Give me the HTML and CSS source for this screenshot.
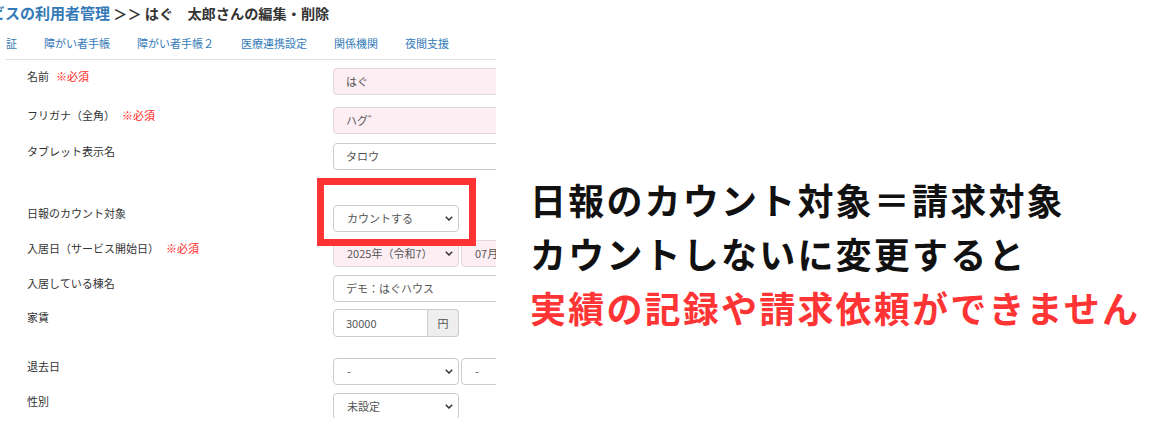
FILE: index.html
```html
<!DOCTYPE html>
<html lang="ja">
<head>
<meta charset="utf-8">
<title>利用者管理</title>
<link rel="stylesheet" href="styles.css">
</head>
<body>
<div class="page">
  <div class="panel">
    <div class="title"><span class="crumb">サービスの利用者管理</span> ＞＞ はぐ　太郎さんの編集・削除</div>
    <div class="tabs">
      <span class="tab">証</span>
      <span class="tab">障がい者手帳</span>
      <span class="tab">障がい者手帳２</span>
      <span class="tab">医療連携設定</span>
      <span class="tab">関係機関</span>
      <span class="tab">夜間支援</span>
    </div>
    <div class="form">
      <div class="row">
        <div class="label">名前<span class="req">※必須</span></div>
        <div class="ctrl wide pink">はぐ</div>
      </div>
      <div class="row mt12">
        <div class="label">フリガナ（全角）<span class="req">※必須</span></div>
        <div class="ctrl wide pink">ハグ゛</div>
      </div>
      <div class="row mt9">
        <div class="label">タブレット表示名</div>
        <div class="ctrl wide">タロウ</div>
      </div>
      <div class="row mt35">
        <div class="label">日報のカウント対象</div>
        <div class="ctrl sel"><span>カウントする</span><svg class="chev" width="8" height="5" viewBox="0 0 8 5"><polyline points="0.8,0.8 4,4 7.2,0.8" fill="none" stroke="#333" stroke-width="1.5"/></svg></div>
      </div>
      <div class="row mt8">
        <div class="label">入居日（サービス開始日）<span class="req">※必須</span></div>
        <div class="pair">
          <div class="ctrl sel pink"><span>2025年（令和7）</span><svg class="chev" width="8" height="5" viewBox="0 0 8 5"><polyline points="0.8,0.8 4,4 7.2,0.8" fill="none" stroke="#333" stroke-width="1.5"/></svg></div>
          <div class="ctrl sel pink"><span>07月</span></div>
        </div>
      </div>
      <div class="row mt8">
        <div class="label">入居している棟名</div>
        <div class="ctrl wide">デモ：はぐハウス</div>
      </div>
      <div class="row mt7">
        <div class="label">家賃</div>
        <div class="group">
          <div class="ctrl money">30000</div>
          <div class="addon">円</div>
        </div>
      </div>
      <div class="row mt21">
        <div class="label">退去日</div>
        <div class="pair">
          <div class="ctrl sel"><span>-</span><svg class="chev" width="8" height="5" viewBox="0 0 8 5"><polyline points="0.8,0.8 4,4 7.2,0.8" fill="none" stroke="#333" stroke-width="1.5"/></svg></div>
          <div class="ctrl sel"><span>-</span></div>
        </div>
      </div>
      <div class="row mt8">
        <div class="label">性別</div>
        <div class="ctrl sel"><span>未設定</span><svg class="chev" width="8" height="5" viewBox="0 0 8 5"><polyline points="0.8,0.8 4,4 7.2,0.8" fill="none" stroke="#333" stroke-width="1.5"/></svg></div>
      </div>
    </div>
  </div>
  <div class="note">
    <p class="line">日報のカウント対象＝請求対象</p>
    <p class="line">カウントしないに変更すると</p>
    <p class="line red">実績の記録や請求依頼ができません</p>
  </div>
  <div class="highlight"></div>
</div>
</body>
</html>
```

FILE: styles.css
```css
html, body {
  margin: 0;
  padding: 0;
  background: #fff;
}
body {
  font-family: "Noto Sans CJK JP", "Noto Sans", sans-serif;
  color: #333;
}
.page {
  position: relative;
  width: 1150px;
  height: 429px;
  overflow: hidden;
  display: flex;
  align-items: flex-start;
}
.panel {
  flex: none;
  width: 496px;
  height: 418px;
  overflow: hidden;
}
.title {
  height: 26px;
  line-height: 26px;
  font-size: 14.2px;
  font-weight: 700;
  color: #333;
  white-space: nowrap;
  margin-left: -40px;
}
.crumb {
  color: #337ab7;
  font-size: 15px;
}
.tabs {
  margin-left: 6px;
  height: 34px;
  box-sizing: border-box;
  padding-top: 9px;
  border-bottom: 1px solid #ddd;
  display: flex;
  gap: 27px;
  font-size: 11px;
  line-height: 16px;
  color: #337ab7;
  white-space: nowrap;
}
.form {
  padding: 8px 0 0 27px;
}
.row {
  display: flex;
  align-items: flex-start;
  white-space: nowrap;
}
.mt7 { margin-top: 7px; }
.mt8 { margin-top: 8px; }
.mt9 { margin-top: 9px; }
.mt12 { margin-top: 12px; }
.mt21 { margin-top: 21px; }
.mt35 { margin-top: 35px; }
.label {
  flex: none;
  width: 306px;
  font-size: 11px;
  line-height: 17px;
  color: #333;
}
.req {
  color: #f22;
  margin-left: 7px;
}
.ctrl {
  flex: none;
  box-sizing: border-box;
  height: 27px;
  border: 1px solid #ccc;
  border-radius: 4px;
  background: #fff;
  font-size: 11px;
  line-height: 25px;
  color: #555;
  padding: 0 12px;
}
.pink {
  background: #fdeef4;
  border-color: #e3d6dc;
}
.wide {
  width: 250px;
}
.sel {
  width: 126px;
  display: flex;
  align-items: center;
  justify-content: space-between;
  padding: 0 5px 0 13px;
}
.chev {
  display: block;
}
.pair {
  display: flex;
  gap: 2px;
}
.group {
  display: flex;
}
.money {
  width: 95px;
  border-radius: 4px 0 0 4px;
  height: 28px;
  line-height: 26px;
}
.addon {
  box-sizing: border-box;
  width: 31px;
  height: 28px;
  border: 1px solid #ccc;
  border-left: none;
  border-radius: 0 4px 4px 0;
  background: #eee;
  font-size: 11px;
  line-height: 26px;
  text-align: center;
  color: #555;
}
.note {
  flex: none;
  margin-left: 34px;
  padding-top: 172px;
}
.line {
  margin: 0;
  font-size: 36px;
  line-height: 54px;
  letter-spacing: 2.2px;
  font-weight: 700;
  color: #111;
  white-space: nowrap;
}
.red {
  color: #ff3535;
}
.highlight {
  position: absolute;
  left: 317px;
  top: 178px;
  width: 159px;
  height: 68px;
  box-sizing: border-box;
  border: 7px solid #ff3333;
}
```
